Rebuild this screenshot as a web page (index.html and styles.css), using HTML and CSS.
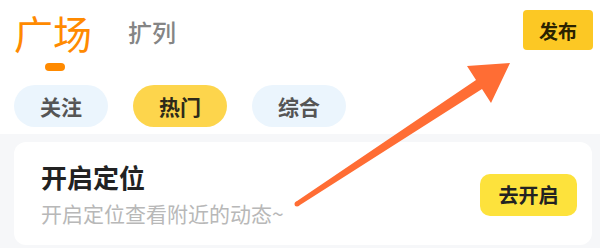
FILE: index.html
```html
<!DOCTYPE html>
<html lang="zh">
<head>
<meta charset="utf-8">
<link rel="stylesheet" href="styles.css">
</head>
<body>
<div class="page">
  <header class="top">
    <div class="titles">
      <div class="main-tab">
        <span class="main-label">广场</span>
        <span class="indicator"></span>
      </div>
      <span class="sub-label">扩列</span>
    </div>
    <button class="publish">发布</button>
  </header>
  <nav class="tabs">
    <span class="tab">关注</span>
    <span class="tab active">热门</span>
    <span class="tab">综合</span>
  </nav>
  <section class="feed">
    <div class="card">
      <div class="card-text">
        <div class="card-title">开启定位</div>
        <div class="card-desc">开启定位查看附近的动态~</div>
      </div>
      <button class="enable">去开启</button>
    </div>
  </section>
  <svg class="arrow" width="600" height="248" viewBox="0 0 600 248">
    <polygon fill="#ff6d34" points="295.6,201.9 476,79.9 467,66 510,63 491,103 482,89.1 298.4,206.1"/>
    <circle cx="297" cy="204" r="2.5" fill="#ff6d34"/>
  </svg>
</div>
</body>
</html>
```

FILE: styles.css
```css
* { box-sizing: border-box; }
html, body { margin: 0; padding: 0; }
body {
  background: #ffffff;
  font-family: "Noto Sans CJK SC", "Noto Sans", sans-serif;
  width: 600px;
  height: 248px;
  overflow: hidden;
}
.page { position: relative; width: 600px; height: 248px; }
.top {
  display: flex;
  justify-content: space-between;
  align-items: flex-start;
  padding: 10px 7px 0 14px;
  height: 78px;
}
.titles { display: flex; align-items: flex-start; gap: 36px; }
.main-tab { display: flex; flex-direction: column; align-items: center; }
.main-label {
  font-size: 39px;
  line-height: 44px;
  color: #ff8a00;
  font-weight: 400;
}
.indicator {
  width: 20px; height: 8px; border-radius: 4px;
  background: #ff8a00;
  margin-top: 9px;
  margin-left: 4px;
}
.sub-label {
  font-size: 24px;
  line-height: 28px;
  color: #858585;
  font-weight: 500;
  margin-top: 8px;
}
.publish {
  border: none;
  background: #fcc824;
  border-radius: 4px;
  width: 70px; height: 40px;
  font-family: inherit;
  font-size: 19px;
  font-weight: 700;
  color: #2a2200;
  padding: 0;
}
.tabs {
  display: flex;
  gap: 25px;
  padding: 7px 14px 0;
  height: 56px;
}
.tab {
  width: 94px; height: 42px;
  border-radius: 21px;
  background: #ebf5fd;
  display: flex; align-items: center; justify-content: center;
  font-size: 21px;
  font-weight: 600;
  color: #555555;
}
.tab.active { background: #fdd54c; color: #2e2a1a; }
.feed {
  background: #f6f7f9;
  padding: 8px 8px 3px 14px;
  height: 114px;
}
.card {
  background: #ffffff;
  border-radius: 12px;
  height: 103px;
  display: flex;
  align-items: center;
  justify-content: space-between;
  padding: 0 15px 0 27px;
}
.card-title {
  font-size: 26px;
  line-height: 30px;
  font-weight: 600;
  color: #222222;
}
.card-desc {
  margin-top: 9px;
  font-size: 21px;
  line-height: 25px;
  color: #b8b8b8;
}
.enable {
  border: none;
  background: #fde23c;
  border-radius: 10px;
  width: 97px; height: 42px;
  font-family: inherit;
  font-size: 20px;
  font-weight: 700;
  color: #222;
  padding: 0;
  margin-top: 2px;
}
.arrow { position: absolute; left: 0; top: 0; pointer-events: none; }
```
